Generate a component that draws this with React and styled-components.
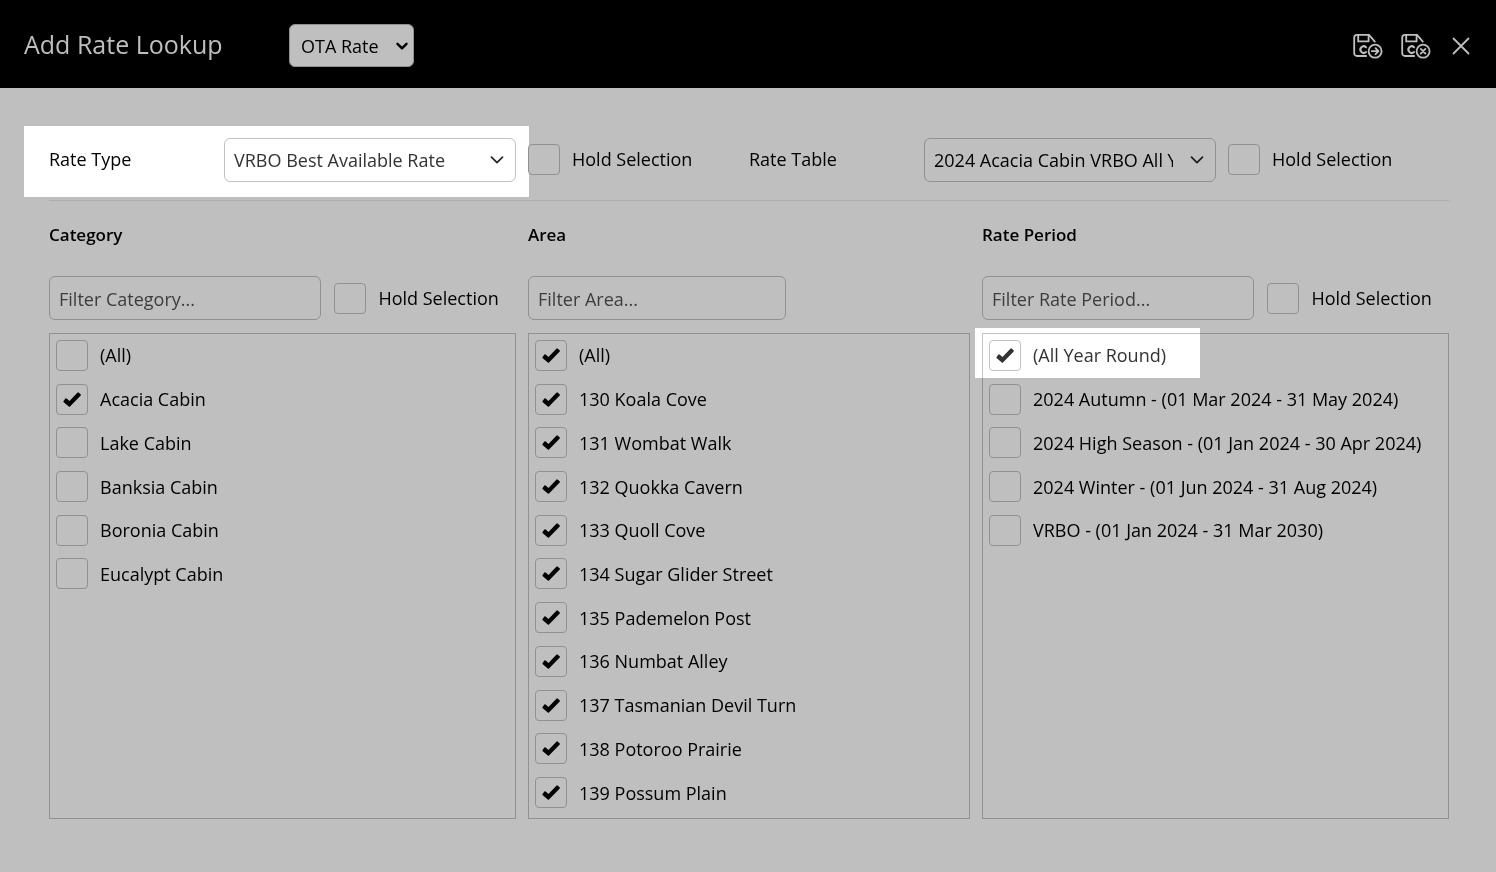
import React from "react";
import styled, { createGlobalStyle } from "styled-components";

const GlobalStyle = createGlobalStyle`
  *, *::before, *::after { box-sizing: border-box; }
  body {
    margin: 0;
    background: #bfbfbf;
    color: #000;
    font-family: "Open Sans", "Noto Sans", sans-serif;
    font-size: 18px;
    line-height: 24px;
  }
  button, input, select { font: inherit; color: inherit; }
`;

const Page = styled.div`
  display: flex;
  flex-direction: column;
  min-height: 100vh;
`;

const Header = styled.header`
  display: flex;
  align-items: center;
  height: 88px;
  padding: 3px 23px 0 24px;
  background: #000;
  color: #bfbfbf;
`;

const Title = styled.h1`
  width: 265px;
  margin: 0;
  padding-bottom: 4px;
  font-size: 25px;
  font-weight: 400;
  line-height: 32px;
`;

const Actions = styled.div`
  display: flex;
  align-items: center;
  gap: 18px;
  margin-left: auto;
`;

const IconButton = styled.button`
  display: flex;
  padding: 0;
  border: 0;
  background: none;
  color: #bfbfbf;
  cursor: pointer;
`;

const SelectWrap = styled.div`
  display: grid;
  align-items: center;
  flex: ${(p) => (p.$compact ? "none" : "1")};
  width: ${(p) => (p.$compact ? "125px" : "auto")};
  min-width: 0;
  & > * { grid-area: 1 / 1; }
  & > svg {
    justify-self: end;
    margin-right: ${(p) => (p.$compact ? "5px" : "12px")};
    pointer-events: none;
  }
`;

const SelectBox = styled.select`
  appearance: none;
  width: 100%;
  height: ${(p) => (p.$compact ? "43px" : "44px")};
  padding: ${(p) => (p.$compact ? "0 28px 0 11px" : "0 42px 0 9px")};
  border: 1px solid #919191;
  border-radius: 6px;
  background: #bfbfbf;
  color: ${(p) => p.$ink || "#000"};
`;

const Main = styled.main`
  display: flex;
  flex: 1;
  flex-direction: column;
  padding: 38px 47px 53px 49px;
`;

const RateRow = styled.div`
  display: grid;
  grid-template-columns: 1fr 1fr;
  padding: 12px 0 18px;
  border-bottom: 1px solid #adadad;
`;

const RateField = styled.div`
  display: flex;
  align-items: center;
`;

const Lit = styled.div`
  position: relative;
  display: flex;
  flex: 1;
  align-items: center;
  min-width: 0;
  ${(p) => p.$on && `
    &::after {
      content: "";
      position: absolute;
      inset: -12px -13px -15px -25px;
      background: #404040;
      mix-blend-mode: color-dodge;
      pointer-events: none;
    }
  `}
`;

const FieldLabel = styled.label`
  width: 175px;
  padding-bottom: 2px;
`;

const HoldSlot = styled.div`
  width: 233px;
  padding: 0 0 2px 12px;
`;

const CheckLabel = styled.label`
  position: relative;
  display: flex;
  align-items: center;
  gap: 12px;
  white-space: nowrap;
  color: ${(p) => (p.$lit ? "#262626" : "inherit")};
  ${(p) => p.$lit && `
    &::after {
      content: "";
      position: absolute;
      top: -12px;
      left: -14px;
      width: 225px;
      height: 50px;
      background: #404040;
      mix-blend-mode: color-dodge;
      pointer-events: none;
    }
  `}
`;

const Tick = styled.span`
  display: grid;
  place-items: center;
  & > * { grid-area: 1 / 1; }
  & > svg { pointer-events: none; }
`;

const TickInput = styled.input`
  appearance: none;
  width: 32px;
  height: 31px;
  margin: 0;
  border: 1px solid #919191;
  border-radius: 4px;
`;

const Columns = styled.div`
  display: grid;
  flex: 1;
  grid-template-columns: 467fr 442fr 467fr;
  gap: 12px;
`;

const Column = styled.section`
  display: flex;
  flex-direction: column;
  min-width: 0;
`;

const ColumnTitle = styled.h2`
  margin: 22px 0 29px;
  font-size: 17px;
  font-weight: 600;
  line-height: 24px;
`;

const FilterRow = styled.div`
  display: flex;
  align-items: center;
  gap: 13px;
  margin-bottom: 13px;
`;

const FilterInput = styled.input`
  width: calc(100% * 7 / 12);
  height: 44px;
  padding: 2px 9px 0;
  border: 1px solid #919191;
  border-radius: 6px;
  background: transparent;
  &::placeholder { color: #3d3d3d; opacity: 1; }
`;

const List = styled.ul`
  display: grid;
  flex: 1;
  grid-template-rows: repeat(11, 1fr);
  margin: 0;
  padding: 0 6px 3px;
  border: 1px solid #919191;
  list-style: none;
`;

const Item = styled.li`
  display: flex;
  align-items: center;
  padding-bottom: 1px;
`;

const Chevron = ({ bold }) => (
  <svg width="14" height="14" viewBox="0 0 14 14" fill="none" stroke={bold ? "#000" : "#1c1c1c"} strokeWidth={bold ? 2.4 : 1.7} strokeLinecap="round" strokeLinejoin="round" aria-hidden="true">
    <path d={bold ? "M2.5 4.8 7 9.3 11.5 4.8" : "M1.5 4.2 7 9.6 12.5 4.2"} />
  </svg>
);

const CheckMark = () => (
  <svg width="18" height="15" viewBox="0 0 18 15" fill="currentColor" aria-hidden="true">
    <path d="M.4 9.3 2.4 6.4Q3 6 3.6 6.5L6.5 9 14.6.6Q15.1.2 15.6.6L17.8 2.5Q18.1 2.9 17.7 3.4L7 14.4Q6.4 14.9 5.8 14.4L.5 9.9Z" />
  </svg>
);

const SaveIcon = ({ children }) => (
  <svg width="30" height="26" viewBox="0 0 30 26" fill="none" stroke="currentColor" strokeWidth="1.8" strokeLinecap="round" strokeLinejoin="round" aria-hidden="true">
    <path d="M13.2 23H4A2.8 2.8 0 0 1 1.2 20.2V4.6A2.8 2.8 0 0 1 4 1.8H16L21.8 8.6" />
    <path d="M5.2 1.8V8.4H15.6V1.8" />
    <path d="M13 14.2A3.3 3.3 0 1 0 13 19" strokeWidth="2" />
    <circle cx="22.1" cy="18.2" r="6.5" />
    {children}
  </svg>
);

const Check = ({ label, checked, lit }) => (
  <CheckLabel $lit={lit}>
    <Tick>
      <TickInput type="checkbox" defaultChecked={checked} />
      {checked && <CheckMark />}
    </Tick>
    {label}
  </CheckLabel>
);

const Select = ({ id, value, compact, ink, label }) => (
  <SelectWrap $compact={compact}>
    <SelectBox id={id} $compact={compact} $ink={ink} aria-label={label}>
      <option>{value}</option>
    </SelectBox>
    <Chevron bold={compact} />
  </SelectWrap>
);

const columns = [
  {
    title: "Category",
    hold: true,
    items: ["(All)", "Acacia Cabin", "Lake Cabin", "Banksia Cabin", "Boronia Cabin", "Eucalypt Cabin"],
    isChecked: (i) => i === 1,
  },
  {
    title: "Area",
    items: [
      "(All)", "130 Koala Cove", "131 Wombat Walk", "132 Quokka Cavern", "133 Quoll Cove",
      "134 Sugar Glider Street", "135 Pademelon Post", "136 Numbat Alley",
      "137 Tasmanian Devil Turn", "138 Potoroo Prairie", "139 Possum Plain",
    ],
    isChecked: () => true,
  },
  {
    title: "Rate Period",
    hold: true,
    lit: 0,
    items: [
      "(All Year Round)", "2024 Autumn - (01 Mar 2024 - 31 May 2024)",
      "2024 High Season - (01 Jan 2024 - 30 Apr 2024)",
      "2024 Winter - (01 Jun 2024 - 31 Aug 2024)", "VRBO - (01 Jan 2024 - 31 Mar 2030)",
    ],
    isChecked: (i) => i === 0,
  },
];

export default function App() {
  return (
    <Page>
      <GlobalStyle />
      <Header>
        <Title>Add Rate Lookup</Title>
        <Select compact value="OTA Rate" label="Lookup type" />
        <Actions>
          <IconButton type="button" aria-label="Save and continue">
            <SaveIcon><path d="M18.8 18.2H25.2M22.5 15.2 25.5 18.2 22.5 21.2" /></SaveIcon>
          </IconButton>
          <IconButton type="button" aria-label="Save and close">
            <SaveIcon><path d="M19.8 15.9 24.4 20.5M24.4 15.9 19.8 20.5" /></SaveIcon>
          </IconButton>
          <IconButton type="button" aria-label="Close">
            <svg width="24" height="24" viewBox="0 0 24 24" fill="none" stroke="currentColor" strokeWidth="1.8" strokeLinecap="round" aria-hidden="true">
              <path d="M4.5 4.5 19.5 19.5M19.5 4.5 4.5 19.5" />
            </svg>
          </IconButton>
        </Actions>
      </Header>
      <Main>
        <RateRow>
          <RateField>
            <Lit $on>
              <FieldLabel htmlFor="rate-type">Rate Type</FieldLabel>
              <Select id="rate-type" value="VRBO Best Available Rate" ink="#262626" />
            </Lit>
            <HoldSlot><Check label="Hold Selection" /></HoldSlot>
          </RateField>
          <RateField>
            <Lit>
              <FieldLabel htmlFor="rate-table">Rate Table</FieldLabel>
              <Select id="rate-table" value="2024 Acacia Cabin VRBO All Year Round" />
            </Lit>
            <HoldSlot><Check label="Hold Selection" /></HoldSlot>
          </RateField>
        </RateRow>
        <Columns>
          {columns.map((c) => (
            <Column key={c.title}>
              <ColumnTitle>{c.title}</ColumnTitle>
              <FilterRow>
                <FilterInput type="text" placeholder={`Filter ${c.title}...`} aria-label={`Filter ${c.title}`} />
                {c.hold && <Check label="Hold Selection" />}
              </FilterRow>
              <List>
                {c.items.map((text, i) => (
                  <Item key={text}>
                    <Check label={text} checked={c.isChecked(i)} lit={c.lit === i} />
                  </Item>
                ))}
              </List>
            </Column>
          ))}
        </Columns>
      </Main>
    </Page>
  );
}
